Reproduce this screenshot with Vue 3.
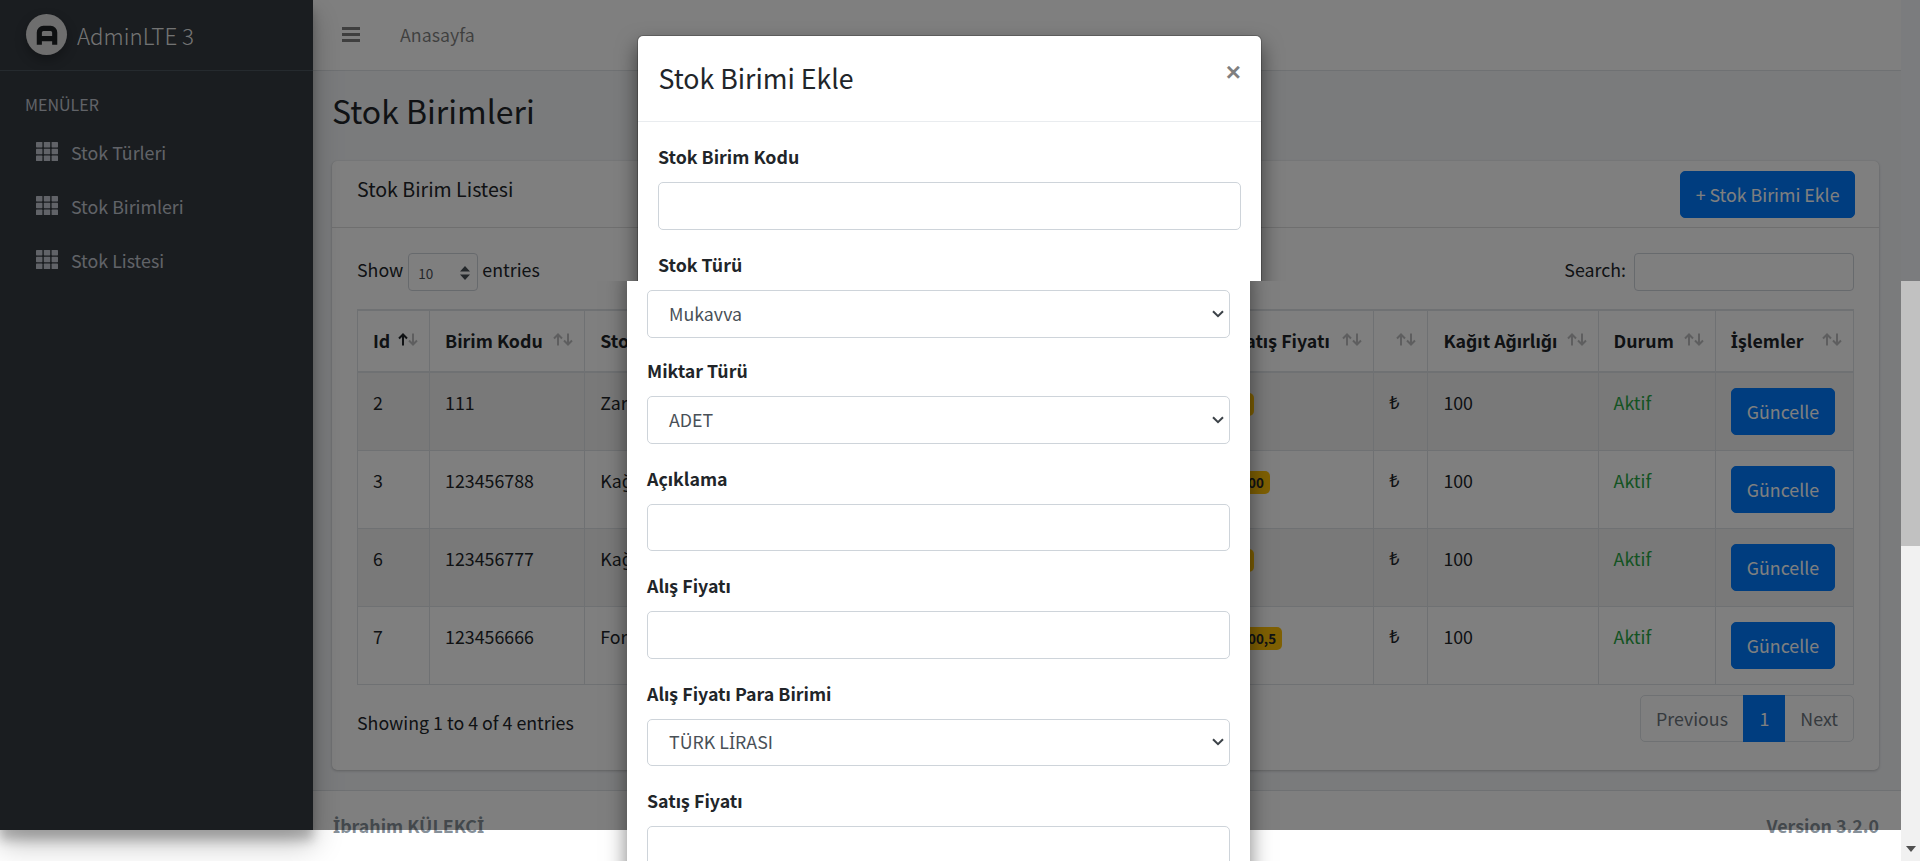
<template>
  <div class="screen">
    <div class="page">
      <aside class="sidebar">
        <a class="brand">
          <span class="brand-logo">
            <svg viewBox="0 0 40 40" width="41" height="41">
              <path d="M13 30V18a4 4 0 0 1 4-4h7a4 4 0 0 1 4 4v12M13 24h15" fill="none" stroke="#1d2023" stroke-width="5"/>
            </svg>
          </span>
          <span class="brand-text">AdminLTE 3</span>
        </a>
        <div class="nav-header">MENÜLER</div>
        <nav class="nav">
          <a v-for="item in menu" :key="item" class="nav-link">
            <svg class="nav-icon" viewBox="0 0 22 19" width="22" height="19">
              <g v-for="row in [0, 6.8, 13.6]" :key="row">
                <rect v-for="col in [0, 7.8, 15.6]" :key="col" :x="col" :y="row" width="6.4" height="5.4" rx="0.6" fill="currentColor"/>
              </g>
            </svg>
            <span>{{ item }}</span>
          </a>
        </nav>
      </aside>

      <div class="wrapper">
        <header class="navbar">
          <svg class="burger" viewBox="0 0 18 15" width="18" height="15">
            <path d="M0 1.500h18M0 7.500h18M0 13.500h18" stroke="currentColor" stroke-width="3"/>
          </svg>
          <a class="nav-home">Anasayfa</a>
        </header>

        <main class="content">
          <h1>Stok Birimleri</h1>
          <section class="card">
            <div class="card-header">
              <h3>Stok Birim Listesi</h3>
              <button type="button" class="btn add-btn">+ Stok Birimi Ekle</button>
            </div>
            <div class="card-body">
              <div class="table-tools">
                <label class="length">
                  <span class="lift">Show</span>
                  <span class="length-select">
                    <span>10</span>
                    <svg viewBox="0 0 10 14" width="10" height="14">
                      <path d="M5 0l5 5.500H0zM5 14l5-5.500H0z" fill="currentColor"/>
                    </svg>
                  </span>
                  <span class="lift">entries</span>
                </label>
                <label class="search"><span class="lift">Search:</span> <input type="text" /></label>
              </div>

              <table class="table">
                <colgroup>
                  <col v-for="col in columns" :key="col.title + col.width" :style="{ width: col.width + 'px' }" />
                </colgroup>
                <thead>
                  <tr>
                    <th v-for="(col, i) in columns" :key="col.title + i">
                      <div class="th-inner">
                        <span v-if="col.title === 'İşlemler'" class="lift"><span class="dot-i">İ</span>şlemler</span>
                        <span v-else class="lift">{{ col.title }}</span>
                        <svg class="sort" viewBox="0 0 20 13" width="20" height="13">
                          <path d="M5 12.500V1.500M1 5.500L5 1.500 9 5.500" fill="none" stroke="currentColor" stroke-width="2" :opacity="i === 0 ? 1 : 0.3"/>
                          <path d="M15 .5v11M11 7.500l4 4 4-4" fill="none" stroke="currentColor" stroke-width="2" opacity="0.3"/>
                        </svg>
                      </div>
                    </th>
                  </tr>
                </thead>
                <tbody>
                  <tr v-for="row in rows" :key="row.id">
                    <td>{{ row.id }}</td>
                    <td>{{ row.code }}</td>
                    <td>{{ row.type }}</td>
                    <td>ADET</td>
                    <td></td>
                    <td><span class="badge">{{ row.buy }}</span></td>
                    <td><span class="badge">{{ row.sell }}</span></td>
                    <td class="lira">₺</td>
                    <td>100</td>
                    <td class="aktif">Aktif</td>
                    <td class="actions"><button type="button" class="btn">Güncelle</button></td>
                  </tr>
                </tbody>
              </table>

              <div class="table-foot">
                <span>Showing 1 to 4 of 4 entries</span>
                <div class="pagination">
                  <a class="page-prev">Previous</a>
                  <a class="page-current">1</a>
                  <a class="page-next">Next</a>
                </div>
              </div>
            </div>
          </section>
        </main>

        <footer class="footer">
          <strong><span class="dot-i">İ</span>brahim KÜLEKC<span class="dot-i">İ</span></strong>
          <strong>Version 3.2.0</strong>
        </footer>
      </div>
    </div>

    <div class="backdrop"></div>
    <div class="backdrop-strip"></div>

    <div class="slice slice-top">
      <div class="modal modal-upper">
        <div class="modal-header">
          <h4>Stok Birimi Ekle</h4>
          <span class="close">×</span>
        </div>
        <div class="modal-body">
          <div class="group">
            <label>Stok Birim Kodu</label>
            <input type="text" />
          </div>
          <div class="group">
            <label>Stok Türü</label>
          </div>
        </div>
      </div>
    </div>

    <div class="slice slice-bottom">
      <div class="modal modal-lower">
        <div class="group first">
          <div class="select">
            <span class="lift">Mukavva</span>
            <svg viewBox="0 0 12 8" width="12" height="8"><path d="M1 1.200l5 5 5-5" fill="none" stroke="#3c4248" stroke-width="2"/></svg>
          </div>
        </div>
        <div class="group">
          <label>Miktar Türü</label>
          <div class="select">
            <span class="lift">ADET</span>
            <svg viewBox="0 0 12 8" width="12" height="8"><path d="M1 1.200l5 5 5-5" fill="none" stroke="#3c4248" stroke-width="2"/></svg>
          </div>
        </div>
        <div class="group">
          <label>Açıklama</label>
          <input type="text" />
        </div>
        <div class="group">
          <label>Alış Fiyatı</label>
          <input type="text" />
        </div>
        <div class="group">
          <label>Alış Fiyatı Para Birimi</label>
          <div class="select">
            <span class="lift">TÜRK L<span class="dot-i">İ</span>RASI</span>
            <svg viewBox="0 0 12 8" width="12" height="8"><path d="M1 1.200l5 5 5-5" fill="none" stroke="#3c4248" stroke-width="2"/></svg>
          </div>
        </div>
        <div class="group">
          <label>Satış Fiyatı</label>
          <input type="text" />
        </div>
      </div>
      <div class="scrollbar">
        <div class="scroll-thumb"></div>
        <svg class="scroll-arrow" viewBox="0 0 10 6" width="10" height="6"><path d="M0 0h10L5 6z" fill="#505050"/></svg>
      </div>
    </div>
  </div>
</template>

<script setup>
const menu = ['Stok Türleri', 'Stok Birimleri', 'Stok Listesi']

const columns = [
  { title: 'Id', width: 72 },
  { title: 'Birim Kodu', width: 155 },
  { title: 'Stok Türü', width: 140 },
  { title: 'Miktar Türü', width: 140 },
  { title: 'Açıklama', width: 130 },
  { title: 'Alış Fiyatı', width: 223 },
  { title: 'Satış Fiyatı', width: 155 },
  { title: '', width: 54 },
  { title: 'Kağıt Ağırlığı', width: 170 },
  { title: 'Durum', width: 117 },
  { title: 'İşlemler', width: 138 }
]

const rows = [
  { id: 2, code: '111', type: 'Zarf', buy: '5', sell: '5' },
  { id: 3, code: '123456788', type: 'Kağıt', buy: '100', sell: '100' },
  { id: 6, code: '123456777', type: 'Kağıt', buy: '5', sell: '5' },
  { id: 7, code: '123456666', type: 'Form', buy: '100,5', sell: '100,5' }
]
</script>

<style>
html,
body {
  margin: 0;
  height: 100%;
  overflow: hidden;
  background: #fff;
}
</style>

<style scoped>
* {
  box-sizing: border-box;
}

.screen {
  position: relative;
  width: 1920px;
  height: 861px;
  overflow: hidden;
  background: #fff;
  color: #212529;
  font-family: "Noto Sans CJK SC", "Noto Sans", "DejaVu Sans", sans-serif;
  font-size: 17.8px;
  line-height: 30px;
}

.dot-i {
  font-family: "Noto Sans", sans-serif;
  font-size: 1.03em;
  line-height: 0;
}

.lift {
  margin-top: -2px;
}

.page {
  display: flex;
  width: 1901px;
  height: 830px;
}

.sidebar {
  position: relative;
  z-index: 2;
  flex: 0 0 313px;
  height: 830px;
  background: #343a40;
  color: #c2c7d0;
  box-shadow: 0 14px 28px rgba(0, 0, 0, 0.25), 0 10px 10px rgba(0, 0, 0, 0.22);
}

.brand {
  display: flex;
  align-items: center;
  gap: 10px;
  height: 71px;
  padding: 0 0 1px 26px;
  border-bottom: 1px solid #4b545c;
  color: rgba(255, 255, 255, 0.9);
}

.brand-logo {
  display: block;
  width: 41px;
  height: 41px;
  border-radius: 50%;
  background: #dcdcdc;
  box-shadow: 0 5px 12px rgba(0, 0, 0, 0.3);
}

.brand-logo svg {
  display: block;
}

.brand-text {
  font-size: 22.3px;
  font-weight: 300;
}

.nav-header {
  padding: 19px 0 0 25px;
  font-size: 16px;
  line-height: 29px;
}

.nav {
  display: grid;
  margin-top: 6px;
  padding-left: 36px;
}

.nav-link {
  display: flex;
  align-items: center;
  gap: 13px;
  height: 54px;
}

.nav-link span {
  margin-top: -1px;
}

.nav-icon {
  flex: none;
  margin-top: -1px;
}

.wrapper {
  flex: 1;
  display: flex;
  flex-direction: column;
  min-width: 0;
  height: 830px;
  background: #f4f6f9;
}

.navbar {
  display: flex;
  align-items: center;
  gap: 40px;
  height: 71px;
  padding: 0 0 1px 29px;
  background: #fff;
  border-bottom: 1px solid #dee2e6;
  color: rgba(0, 0, 0, 0.5);
}

.nav-home {
  margin-top: -1px;
}

.content {
  flex: none;
  height: 719px;
  padding: 18px 22px 0 19px;
}

h1 {
  margin: 0 0 29px;
  font-size: 32px;
  font-weight: 400;
  line-height: 43px;
}

.card {
  height: 609px;
  border-radius: 5px;
  background: #fff;
  box-shadow: 0 0 1px rgba(0, 0, 0, 0.125), 0 1px 3px rgba(0, 0, 0, 0.2);
}

.card-header {
  display: flex;
  align-items: center;
  justify-content: space-between;
  height: 67px;
  padding: 0 24px 0 25px;
  border-bottom: 1px solid rgba(0, 0, 0, 0.125);
}

h3 {
  margin: 0 0 10px;
  font-size: 19.6px;
  font-weight: 400;
  line-height: 30px;
}

.btn {
  height: 47px;
  padding: 0 15px 2px;
  border: 1px solid #007bff;
  border-radius: 5px;
  background: #007bff;
  color: #fff;
  font: inherit;
}

.add-btn {
  margin-top: 1px;
  padding-left: 14.5px;
  padding-right: 14.5px;
}

.card-body {
  padding: 25px 25px 0;
}

.table-tools {
  display: flex;
  align-items: flex-start;
  justify-content: space-between;
  height: 56px;
}

.length,
.search {
  display: flex;
  align-items: center;
  height: 34px;
}

.length-select {
  display: flex;
  align-items: center;
  justify-content: space-between;
  width: 70px;
  height: 38px;
  margin: 4px 4px 0 5px;
  padding: 1px 7px 0 9px;
  border: 1px solid #ced4da;
  border-radius: 4px;
  color: #495057;
  font-size: 13.5px;
}

.search input {
  width: 220px;
  height: 38px;
  margin: 4px 0 0 8px;
  border: 1px solid #ced4da;
  border-radius: 4px;
  background: #fff;
}

.table {
  width: 1497px;
  table-layout: fixed;
  border-collapse: collapse;
  border: 1px solid #dee2e6;
}

th,
td {
  border: 1px solid #dee2e6;
  vertical-align: top;
  white-space: nowrap;
  overflow: hidden;
  text-align: left;
}

th {
  height: 62px;
  padding: 15px 11px 15px 15px;
  border-top-width: 2px;
  border-bottom-width: 2px;
  font-weight: 700;
}

.th-inner {
  display: flex;
  align-items: center;
  justify-content: space-between;
  height: 30px;
}

.sort {
  flex: none;
  margin-top: -3px;
}

td {
  height: 78px;
  padding: 14px 15px 15px;
}

td.actions {
  padding-top: 15px;
}

tbody tr:nth-child(odd) {
  background: rgba(0, 0, 0, 0.05);
}

.badge {
  display: inline-block;
  padding: 0 6px;
  border-radius: 5px;
  background: #ffc107;
  font-size: 13.4px;
  font-weight: 700;
  line-height: 23px;
  vertical-align: 0;
}

.lira {
  font-family: "Noto Sans", sans-serif;
  font-size: 18px;
}

.aktif {
  color: #28a745;
}

.table-foot {
  display: flex;
  align-items: flex-start;
  justify-content: space-between;
  margin-top: 10px;
}

.table-foot > span {
  padding-top: 12px;
}

.pagination {
  display: flex;
  height: 47px;
  border: 1px solid #dee2e6;
  border-radius: 5px;
  color: #6c757d;
  line-height: 44px;
}

.pagination a {
  padding: 0 15px;
}

.pagination .page-prev {
  padding: 0 15.5px;
}

.pagination .page-current {
  margin: -1px 0;
  padding: 0 16px;
  background: #007bff;
  color: #fff;
  line-height: 46px;
}

.footer {
  display: flex;
  justify-content: space-between;
  flex: none;
  height: 40px;
  padding: 19px 22px 0 20px;
  background: #fff;
  border-top: 1px solid #dee2e6;
  color: #869099;
}

.backdrop {
  position: absolute;
  z-index: 3;
  left: 0;
  top: 0;
  width: 1901px;
  height: 830px;
  background: rgba(0, 0, 0, 0.5);
}

.backdrop-strip {
  position: absolute;
  z-index: 3;
  left: 1901px;
  top: 0;
  width: 19px;
  height: 281px;
  background: #7b7c7e;
}

.slice {
  position: absolute;
  z-index: 4;
  left: 0;
  width: 1920px;
  overflow: hidden;
}

.slice-top {
  top: 0;
  height: 281px;
}

.slice-bottom {
  top: 281px;
  height: 580px;
}

.modal {
  position: absolute;
  background: #fff;
  box-shadow: 0 10px 20px rgba(0, 0, 0, 0.5);
}

.modal-upper {
  left: 637px;
  top: 35px;
  width: 625px;
  height: 400px;
  border: 1px solid rgba(0, 0, 0, 0.2);
  border-radius: 6px;
  background-clip: padding-box;
}

.modal-lower {
  left: 627px;
  top: -20px;
  width: 623px;
  height: 700px;
  padding: 29px 20px 0 20px;
}

.modal-header {
  display: flex;
  align-items: flex-start;
  justify-content: space-between;
  height: 86px;
  padding: 19px 20px 0 20.5px;
  border-bottom: 1px solid #e9ecef;
}

h4 {
  margin: 0;
  font-size: 26.700px;
  font-weight: 400;
  line-height: 45px;
}

.close {
  padding-top: 2px;
  color: rgba(0, 0, 0, 0.5);
  font-family: "Liberation Sans", sans-serif;
  font-size: 26px;
  font-weight: 700;
  line-height: 30px;
}

.modal-body {
  padding: 20px 20px;
}

.group {
  margin-bottom: 20px;
}

.group.first {
  margin-bottom: 18.5px;
}

.group label {
  display: block;
  margin: -1px 0 11px;
  font-weight: 700;
}

.group input,
.select {
  display: block;
  width: 583px;
  height: 47.5px;
  border: 1px solid #ced4da;
  border-radius: 5px;
  background: #fff;
  color: #495057;
}

.select {
  display: flex;
  align-items: center;
  justify-content: space-between;
  padding: 0 5px 0 21px;
}

.scrollbar {
  position: absolute;
  right: 0;
  top: 0;
  bottom: 0;
  width: 19px;
  background: #f1f1f1;
}

.scroll-thumb {
  height: 265px;
  background: #c1c1c1;
}

.scroll-arrow {
  position: absolute;
  left: 5px;
  bottom: 9px;
}
</style>
